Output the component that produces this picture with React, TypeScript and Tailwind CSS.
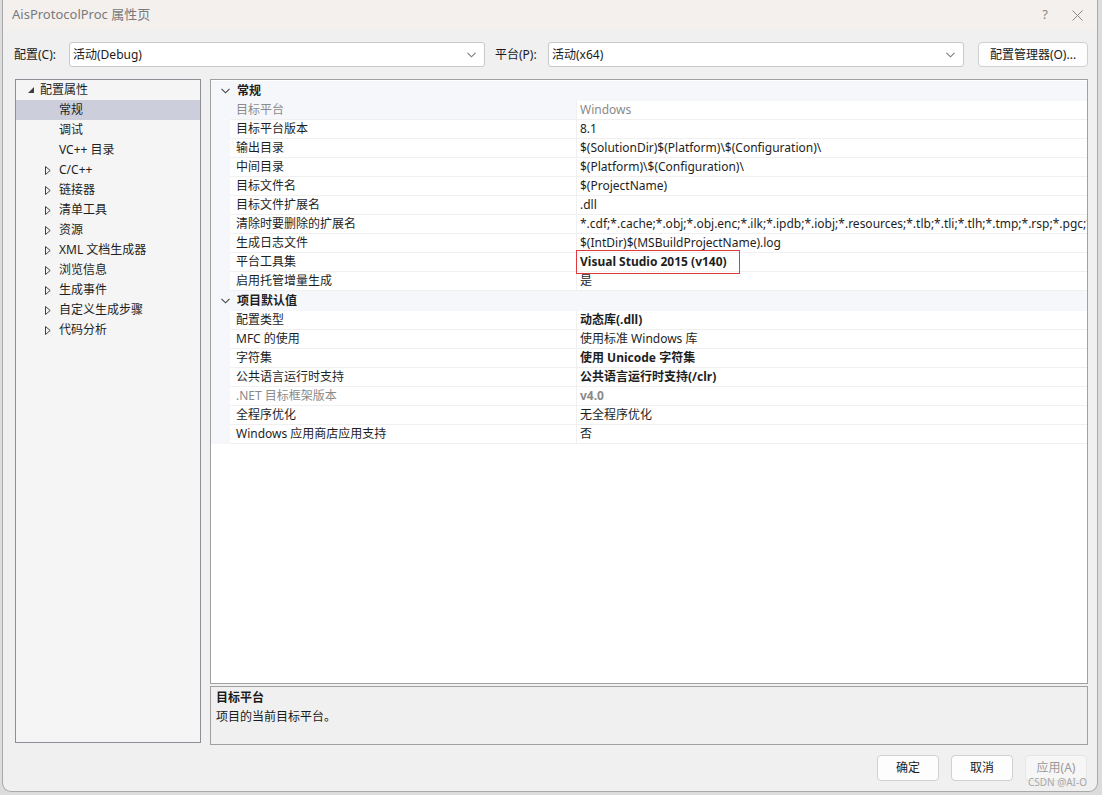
import React from "react";

const font = {
  fontFamily: '"Noto Sans", "Noto Sans CJK SC", sans-serif',
};

type Row = {
  name: string;
  value: string;
  bold?: boolean;
  dim?: boolean;
  selected?: boolean;
  boxed?: boolean;
};

const general: Row[] = [
  { name: "目标平台", value: "Windows", dim: true, selected: true },
  { name: "目标平台版本", value: "8.1" },
  { name: "输出目录", value: "$(SolutionDir)$(Platform)\\$(Configuration)\\" },
  { name: "中间目录", value: "$(Platform)\\$(Configuration)\\" },
  { name: "目标文件名", value: "$(ProjectName)" },
  { name: "目标文件扩展名", value: ".dll" },
  {
    name: "清除时要删除的扩展名",
    value:
      "*.cdf;*.cache;*.obj;*.obj.enc;*.ilk;*.ipdb;*.iobj;*.resources;*.tlb;*.tli;*.tlh;*.tmp;*.rsp;*.pgc;*.pgd;*.meta;*.tlog;*.manifest;*.res;*.pch;*.exp;*.idb;*.rep;*.xdc;*.pdb",
  },
  { name: "生成日志文件", value: "$(IntDir)$(MSBuildProjectName).log" },
  { name: "平台工具集", value: "Visual Studio 2015 (v140)", bold: true, boxed: true },
  { name: "启用托管增量生成", value: "是" },
];

const defaults: Row[] = [
  { name: "配置类型", value: "动态库(.dll)", bold: true },
  { name: "MFC 的使用", value: "使用标准 Windows 库" },
  { name: "字符集", value: "使用 Unicode 字符集", bold: true },
  { name: "公共语言运行时支持", value: "公共语言运行时支持(/clr)", bold: true },
  { name: ".NET 目标框架版本", value: "v4.0", bold: true, dim: true },
  { name: "全程序优化", value: "无全程序优化" },
  { name: "Windows 应用商店应用支持", value: "否" },
];

const treeChildren: { label: string; expandable: boolean }[] = [
  { label: "常规", expandable: false },
  { label: "调试", expandable: false },
  { label: "VC++ 目录", expandable: false },
  { label: "C/C++", expandable: true },
  { label: "链接器", expandable: true },
  { label: "清单工具", expandable: true },
  { label: "资源", expandable: true },
  { label: "XML 文档生成器", expandable: true },
  { label: "浏览信息", expandable: true },
  { label: "生成事件", expandable: true },
  { label: "自定义生成步骤", expandable: true },
  { label: "代码分析", expandable: true },
];

function Chevron({ className }: { className?: string }) {
  return (
    <svg width="9" height="6" viewBox="0 0 9 6" className={className}>
      <path d="M0.5 0.8 L4.5 4.8 L8.5 0.8" fill="none" stroke="currentColor" strokeWidth="1.1" />
    </svg>
  );
}

function Select({ value }: { value: string }) {
  return (
    <div className="flex h-[25px] flex-1 items-center justify-between rounded-[3px] border border-[#c9c9c9] bg-white pl-[3px] pr-[8px]">
      <span className="text-[12px] text-[#1a1a1a]">{value}</span>
      <Chevron className="text-[#7a7a7a]" />
    </div>
  );
}

function SectionHeader({ title }: { title: string }) {
  return (
    <div className="flex h-[20px] items-center bg-[#f5f7fa]">
      <div className="flex w-[26px] justify-center pl-[2px]">
        <Chevron className="text-[#444]" />
      </div>
      <span className="text-[12px] font-bold text-[#1e1e1e]">{title}</span>
    </div>
  );
}

function PropRow({ row }: { row: Row }) {
  return (
    <div className={"flex h-[19px] " + (row.boxed ? "relative z-10" : "")}>
      <div className="w-[19px] shrink-0 bg-[#f5f7fa]" />
      <div
        className={
          "flex w-[347px] shrink-0 items-center border-b border-r border-[#f0f0f0] pl-[6px] text-[12px] " +
          (row.selected ? "bg-[#f5f7fa] " : "bg-white ") +
          (row.dim ? "text-[#8a8a8a]" : "text-[#1e1e1e]")
        }
      >
        {row.name}
      </div>
      <div className="flex min-w-0 flex-1 items-center border-b border-[#f0f0f0] bg-white pl-[2px]">
        <span
          className={
            "whitespace-nowrap px-[1px] text-[12px] " +
            (row.bold ? "font-bold " : "") +
            (row.dim ? "text-[#8a8a8a] " : "text-[#1e1e1e] ") +
            (row.boxed ? "outline outline-1 outline-[#e0393e] outline-offset-[2px] pr-[10px]" : "")
          }
        >
          {row.value}
        </span>
      </div>
    </div>
  );
}

function Button({ label, disabled }: { label: string; disabled?: boolean }) {
  return (
    <div
      className={
        "flex h-[26px] w-[62px] items-center justify-center rounded-[4px] border text-[12px] " +
        (disabled
          ? "border-[#e6e6e6] bg-[#f6f6f6] text-[#9a9a9a]"
          : "border-[#d0d0d0] bg-[#fdfdfd] text-[#1a1a1a]")
      }
    >
      {label}
    </div>
  );
}

export default function App() {
  return (
    <div className="flex h-[795px] w-[1102px] overflow-hidden bg-[#dcdcdc]" style={font}>
      <div className="ml-[3px] flex h-[791px] w-[1094px] flex-col rounded-b-[8px] bg-[#f0f0f0] shadow-[0_0_0_1px_#a9a9a9]">
        {/* title bar */}
        <div className="flex h-[30px] items-center justify-between bg-[#f3f0ee] pl-[9px] pr-[14px]">
          <span className="text-[13px] text-[#7a7a7a]">AisProtocolProc 属性页</span>
          <div className="flex items-center gap-[24px] text-[#888]">
            <span className="text-[13px]">?</span>
            <svg width="11" height="11" viewBox="0 0 11 11">
              <path d="M0.5 0.5 L10.5 10.5 M10.5 0.5 L0.5 10.5" stroke="currentColor" strokeWidth="1" />
            </svg>
          </div>
        </div>

        {/* configuration row */}
        <div className="mt-[12px] flex items-center pl-[11px] pr-[9px]">
          <span className="w-[55px] text-[12px] text-[#1a1a1a]">配置(C):</span>
          <Select value="活动(Debug)" />
          <span className="ml-[10px] w-[53px] text-[12px] text-[#1a1a1a]">平台(P):</span>
          <Select value="活动(x64)" />
          <div className="ml-[14px] flex h-[25px] w-[110px] items-center justify-center rounded-[4px] border border-[#d0d0d0] bg-[#fdfdfd] text-[12px] text-[#1a1a1a]">
            配置管理器(O)...
          </div>
        </div>

        {/* main area */}
        <div className="mt-[12px] flex pl-[12px] pr-[9px]">
          {/* tree */}
          <div className="h-[664px] w-[186px] shrink-0 border border-[#8c9096] bg-[#f5f5f5]">
            <div className="flex h-[20px] items-center">
              <div className="flex w-[24px] justify-end pr-[6px]">
                <svg width="6" height="6" viewBox="0 0 6 6">
                  <path d="M6 0 L6 6 L0 6 Z" fill="#404040" />
                </svg>
              </div>
              <span className="whitespace-nowrap text-[12px] text-[#1e1e1e]">配置属性</span>
            </div>
            {treeChildren.map((c) => (
              <div
                key={c.label}
                className={"flex h-[20px] items-center " + (c.label === "常规" ? "bg-[#cccedb]" : "")}
              >
                <div className="flex w-[43px] shrink-0 justify-end pr-[8px]">
                  {c.expandable && (
                    <svg width="6" height="9" viewBox="0 0 6 9">
                      <path d="M0.5 0.5 L5.2 4.5 L0.5 8.5 Z" fill="none" stroke="#404040" strokeWidth="1" />
                    </svg>
                  )}
                </div>
                <span className="whitespace-nowrap text-[12px] text-[#1e1e1e]">{c.label}</span>
              </div>
            ))}
          </div>

          {/* right */}
          <div className="ml-[9px] flex min-w-0 flex-1 flex-col">
            <div className="h-[605px] overflow-hidden border border-[#a0a0a0] bg-white pt-px">
              <SectionHeader title="常规" />
              {general.map((r) => (
                <PropRow key={r.name} row={r} />
              ))}
              <SectionHeader title="项目默认值" />
              {defaults.map((r) => (
                <PropRow key={r.name} row={r} />
              ))}
            </div>
            <div className="mt-[2px] h-[59px] border border-[#a0a0a0] bg-[#f0f0f0] px-[5px] pt-[2px]">
              <div className="text-[12px] font-bold leading-[18px] text-[#1a1a1a]">目标平台</div>
              <div className="text-[12px] leading-[19px] text-[#1a1a1a]">项目的当前目标平台。</div>
            </div>
          </div>
        </div>

        {/* buttons */}
        <div className="relative mt-[10px] flex justify-end gap-[12px] pr-[10px]">
          <Button label="确定" />
          <Button label="取消" />
          <Button label="应用(A)" disabled />
          <span className="absolute right-[10px] top-[22px] text-[10px] leading-none text-[#a8a8a8]">
            CSDN @AI-O
          </span>
        </div>
      </div>
    </div>
  );
}
